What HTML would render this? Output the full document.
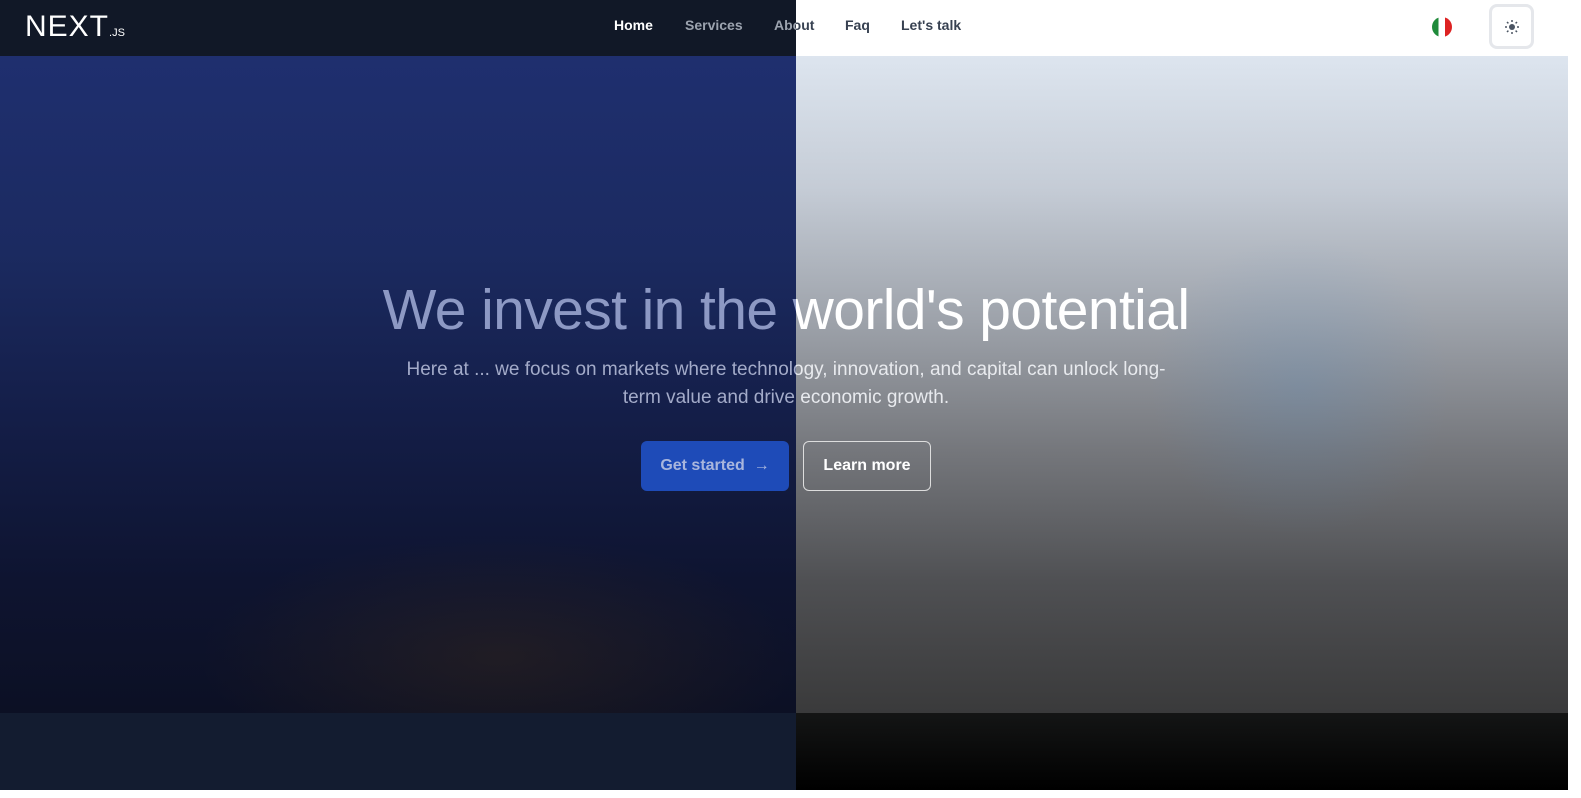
<!DOCTYPE html>
<html><head><meta charset="utf-8"><style>
*{margin:0;padding:0;box-sizing:border-box}
body{width:1581px;height:798px;overflow:hidden;background:#fff;font-family:"Liberation Sans",sans-serif;position:relative}
.half{position:absolute;top:0;height:790px;overflow:hidden}
.L{left:0;width:796px}
.R{left:796px;width:772px}
.inner{position:absolute;top:0;width:1568px;height:790px}
.L .inner{left:0}
.R .inner{left:-796px}
.nav{position:absolute;top:0;left:0;width:1568px;height:56px}
.L .nav{background:#111827}
.R .nav{background:#fff}
.hero{position:absolute;top:56px;left:0;width:1568px;height:657px}
.L .hero{background:radial-gradient(ellipse 300px 120px at 500px 600px,rgba(90,60,20,.25),transparent),linear-gradient(#1f2f6f 0%,#1b2a60 30%,#141e48 55%,#0e1430 80%,#0c1024 100%)}
.R .hero{background:radial-gradient(ellipse 150px 150px at 1300px 330px,rgba(80,140,200,.2),transparent),linear-gradient(#dde5ef 0%,#c5ccd6 20%,#9ea3ab 40%,#75777c 60%,#4f5053 80%,#3a3a3b 100%)}
.foot{position:absolute;top:713px;left:0;width:1568px;height:77px}
.L .foot{background:#131c30}
.R .foot{background:linear-gradient(#141515,#000)}
.links{position:absolute;top:17px;left:614px;font-size:14px;font-weight:bold}
.links span{position:absolute;white-space:nowrap}
.L .links span{color:#9ca3af}.L .links span.a{color:#fff}
.R .links span{color:#374151}
h1{position:absolute;top:277px;left:0;width:1572px;text-align:center;font-weight:normal;font-size:57px;letter-spacing:-0.6px}
.L h1{color:#8d99c4}.R h1{color:#fff}
p.s{position:absolute;top:356px;left:372px;width:828px;text-align:center;font-size:19px;line-height:28px}
.L p.s{color:#a3abc9}.R p.s{color:#e8eaee}
.btn{position:absolute;top:441px;height:50px;border-radius:6px;font-size:16px;font-weight:bold;display:flex;align-items:center;justify-content:center}
.b1{left:641px;width:148px;background:#1e4bb8;color:#a9b6dd}
.b2{left:803px;width:128px;border:1.5px solid #ddd;color:#fff}
</style></head><body>
<div class="half L"><div class="inner">
<div class="nav"></div><div class="hero"></div><div class="foot"></div>
<div style="position:absolute;left:25px;top:10px;color:#fff;font-size:30px;letter-spacing:1px;font-weight:normal">NEXT<span style="font-size:11px;letter-spacing:0">.JS</span></div>
<div class="links"><span class="a" style="left:0">Home</span><span style="left:71px">Services</span><span style="left:160px">About</span><span style="left:231px">Faq</span><span style="left:287px">Let's talk</span></div>
<h1>We invest in the world's potential</h1>
<p class="s">Here at ... we focus on markets where technology, innovation, and capital can unlock long-<br>term value and drive economic growth.</p>
<div class="btn b1">Get started&nbsp;&nbsp;→</div><div class="btn b2">Learn more</div>
</div></div>
<div class="half R"><div class="inner">
<div class="nav"></div><div class="hero"></div><div class="foot"></div>
<div class="links"><span class="a" style="left:0">Home</span><span style="left:71px">Services</span><span style="left:160px">About</span><span style="left:231px">Faq</span><span style="left:287px">Let's talk</span></div>
<h1>We invest in the world's potential</h1>
<p class="s">Here at ... we focus on markets where technology, innovation, and capital can unlock long-<br>term value and drive economic growth.</p>
<div class="btn b1">Get started&nbsp;&nbsp;→</div><div class="btn b2">Learn more</div>
<div style="position:absolute;left:1432px;top:17px;width:20px;height:20px;border-radius:50%;background:linear-gradient(90deg,#1f8a3a 33%,#fff 33%,#fff 66%,#d22 66%)"></div>
<div style="position:absolute;left:1489px;top:4px;width:45px;height:45px;border:3px solid #e5e7eb;border-radius:8px;display:flex;align-items:center;justify-content:center">
<svg width="16" height="16" viewBox="0 0 16 16"><circle cx="8" cy="8" r="3" fill="#4b5563"/><g stroke="#4b5563" stroke-width="1.5"><path d="M8 1v2M8 13v2M1 8h2M13 8h2M3 3l1.4 1.4M11.6 11.6L13 13M3 13l1.4-1.4M11.6 4.4L13 3"/></g></svg></div>
</div></div>
</body></html>
